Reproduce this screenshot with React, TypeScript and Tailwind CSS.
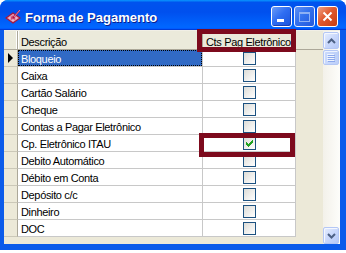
import React from "react";

const rows = [
  "Bloqueio",
  "Caixa",
  "Cartão Salário",
  "Cheque",
  "Contas a Pagar Eletrônico",
  "Cp. Eletrônico ITAU",
  "Debito Automático",
  "Débito em Conta",
  "Depósito c/c",
  "Dinheiro",
  "DOC",
];

function Check() {
  return (
    <svg width="7" height="7" viewBox="0 0 7 7" shapeRendering="crispEdges">
      <g fill="#21A121">
        <rect x="6" y="0" width="1" height="1" />
        <rect x="5" y="1" width="2" height="1" />
        <rect x="0" y="2" width="1" height="1" />
        <rect x="4" y="2" width="3" height="1" />
        <rect x="0" y="3" width="2" height="1" />
        <rect x="3" y="3" width="3" height="1" />
        <rect x="0" y="4" width="5" height="1" />
        <rect x="1" y="5" width="3" height="1" />
        <rect x="2" y="6" width="1" height="1" />
      </g>
    </svg>
  );
}

function CheckBox({ checked }: { checked?: boolean }) {
  return (
    <div className="w-[13px] h-[13px] border border-[#1C5180] bg-[linear-gradient(135deg,#dcdcd7,#ffffff)] flex items-center justify-center">
      {checked && <Check />}
    </div>
  );
}

function ScrollBtn({ dir }: { dir: "up" | "down" }) {
  return (
    <div className="w-[16px] h-[17px] ml-[0px] rounded-[2px] border border-[#B4C7F5] bg-[linear-gradient(135deg,#e6eefe_0%,#c9d8fc_50%,#b4c8f7_100%)] flex items-center justify-center shadow-[inset_1px_1px_0_#f4f7fe]">
      <svg width="9" height="6" viewBox="0 0 9 6">
        {dir === "up" ? (
          <path d="M1 5 L4.5 1.5 L8 5" stroke="#4D6185" strokeWidth="2" fill="none" />
        ) : (
          <path d="M1 1 L4.5 4.5 L8 1" stroke="#4D6185" strokeWidth="2" fill="none" />
        )}
      </svg>
    </div>
  );
}

export default function App() {
  return (
    <div className="relative w-[346px] h-[253px] bg-white overflow-hidden font-['Liberation_Sans',Arial,sans-serif]">
      <div className="w-[346px] h-[250px] flex flex-col rounded-t-[8px] overflow-hidden bg-[#0B5BEA]">
        {/* Title bar */}
        <div className="h-[30px] shrink-0 flex items-start bg-[linear-gradient(180deg,#0997ff,#0053ee_8%,#0050ee_40%,#0066ff_88%,#0066ff_93%,#005bff_95%,#003dd7_96%,#003dd7)]">
          <svg className="ml-[5px] mt-[8px]" width="17" height="17" viewBox="0 0 17 17">
            <path d="M1 10 L8 5 L15 10 L8 15 Z" fill="#E596B0" stroke="#A3183F" strokeWidth="1.2" />
            <path d="M4 10 L8 7.5 L12 10 L8 12.5 Z" fill="#C73A64" opacity="0.8" />
            <circle cx="5" cy="10" r="0.8" fill="#fff" />
            <circle cx="8" cy="12" r="0.8" fill="#fff" />
            <circle cx="11" cy="10" r="0.8" fill="#fff" />
            <path d="M8 10 L14.5 2.5" stroke="#B01244" strokeWidth="1.6" />
            <path d="M9 9 L15 2" stroke="#FFD1DD" strokeWidth="0.6" />
          </svg>
          <div className="ml-[3px] mt-[10px] text-white font-bold text-[13px] leading-[15px] [text-shadow:1px_1px_0_#0a1e8c]">
            Forma de Pagamento
          </div>
          <div className="ml-auto mr-[8px] mt-[6px] flex gap-[2px]">
            <div className="w-[21px] h-[21px] rounded-[3px] border border-white bg-[linear-gradient(135deg,#6c9cf7_0%,#2f6ef2_45%,#1a53dc_100%)] shadow-[inset_-1px_-1px_0_#1941b8] relative">
              <div className="absolute left-[5px] top-[12px] w-[7px] h-[3px] bg-white" />
            </div>
            <div className="w-[21px] h-[21px] rounded-[3px] border border-[#e8efff] bg-[linear-gradient(135deg,#5f90f3_0%,#3371ee_45%,#2358dc_100%)] flex items-center justify-center">
              <div className="w-[11px] h-[10px] border border-[#8DB0F4] border-t-[2px]" />
            </div>
            <div className="w-[21px] h-[21px] rounded-[3px] border border-white bg-[linear-gradient(135deg,#f0a285_0%,#e0592f_45%,#c83d10_100%)] flex items-center justify-center">
              <svg width="11" height="11" viewBox="0 0 11 11">
                <path d="M1.5 1.5 L9.5 9.5 M9.5 1.5 L1.5 9.5" stroke="#fff" strokeWidth="2" />
              </svg>
            </div>
          </div>
        </div>

        {/* Body */}
        <div className="flex-1 flex ml-[4px] mr-[6px] mb-[6px] bg-[#ECE9D8] border-t border-[#F1EFE6]">
          {/* Grid */}
          <div className="flex-1 flex flex-col text-[11px] tracking-[-0.35px] text-black">
            {/* header */}
            <div className="h-[19px] flex bg-[#EBEADB] border-b border-[#ACA899]">
              <div className="w-[14px] h-full border-r border-[#ACA899] shadow-[inset_-1px_0_0_#ffffff]" />
              <div className="w-[185px] h-full border-r border-[#ACA899] pl-[3px] pt-[3px] leading-[16px] shadow-[inset_1px_0_0_#ffffff]">
                Descrição
              </div>
              <div className="w-[93px] h-full border-r border-[#ACA899] pl-[3px] pt-[3px] leading-[16px]">
                Cts Pag Eletrônico
              </div>
            </div>
            {rows.map((r, i) => (
              <div key={r} className="h-[17px] flex">
                <div className="w-[14px] h-full bg-[#ECE9D8] border-r border-b border-r-[#ACA899] border-b-[#CBC8B8] flex items-center pl-[4px]">
                  {i === 0 && (
                    <svg width="6" height="10" viewBox="0 0 6 10">
                      <path d="M0 0 L5 5 L0 10 Z" fill="#000" />
                    </svg>
                  )}
                </div>
                <div className="w-[185px] h-full bg-white border-r border-b border-[#C8C8C8]">
                  {i === 0 ? (
                    <div className="h-[16px] border border-dotted border-black bg-[#316AC5] text-white pl-[2px] leading-[16px]">
                      {r}
                    </div>
                  ) : (
                    <div className="h-[16px] pl-[3px] pt-[1px] leading-[16px]">{r}</div>
                  )}
                </div>
                <div className="w-[93px] h-full bg-white border-r border-b border-[#C8C8C8] flex items-center justify-center">
                  <CheckBox checked={i === 5} />
                </div>
              </div>
            ))}
          </div>

          {/* Scrollbar */}
          <div className="w-[17px] flex flex-col items-start pt-[1px] bg-[linear-gradient(90deg,#f3f1ea,#fdfdfa)]">
            <ScrollBtn dir="up" />
            <div className="mt-[1px] w-[16px] h-[15px] rounded-[2px] border border-[#B4C7F5] bg-[linear-gradient(90deg,#cbdafd,#bccff8)] shadow-[inset_1px_1px_0_#eef3fe] flex items-center justify-center">
              <svg width="8" height="8" viewBox="0 0 8 8" shapeRendering="crispEdges">
                {[0, 2, 4, 6].map((y) => (
                  <g key={y}>
                    <rect x="0" y={y} width="7" height="1" fill="#EEF4FE" />
                    <rect x="1" y={y + 1} width="7" height="1" fill="#8CA8EC" />
                  </g>
                ))}
              </svg>
            </div>
            <div className="flex-1" />
            <ScrollBtn dir="down" />
          </div>
        </div>
      </div>

      {/* Annotation boxes */}
      <div className="absolute left-[197px] top-[29px] w-[99px] h-[23px] border-[5px] border-[#7D0A1D]" />
      <div className="absolute left-[199px] top-[133px] w-[96px] h-[24px] border-[5px] border-[#7D0A1D]" />
    </div>
  );
}
